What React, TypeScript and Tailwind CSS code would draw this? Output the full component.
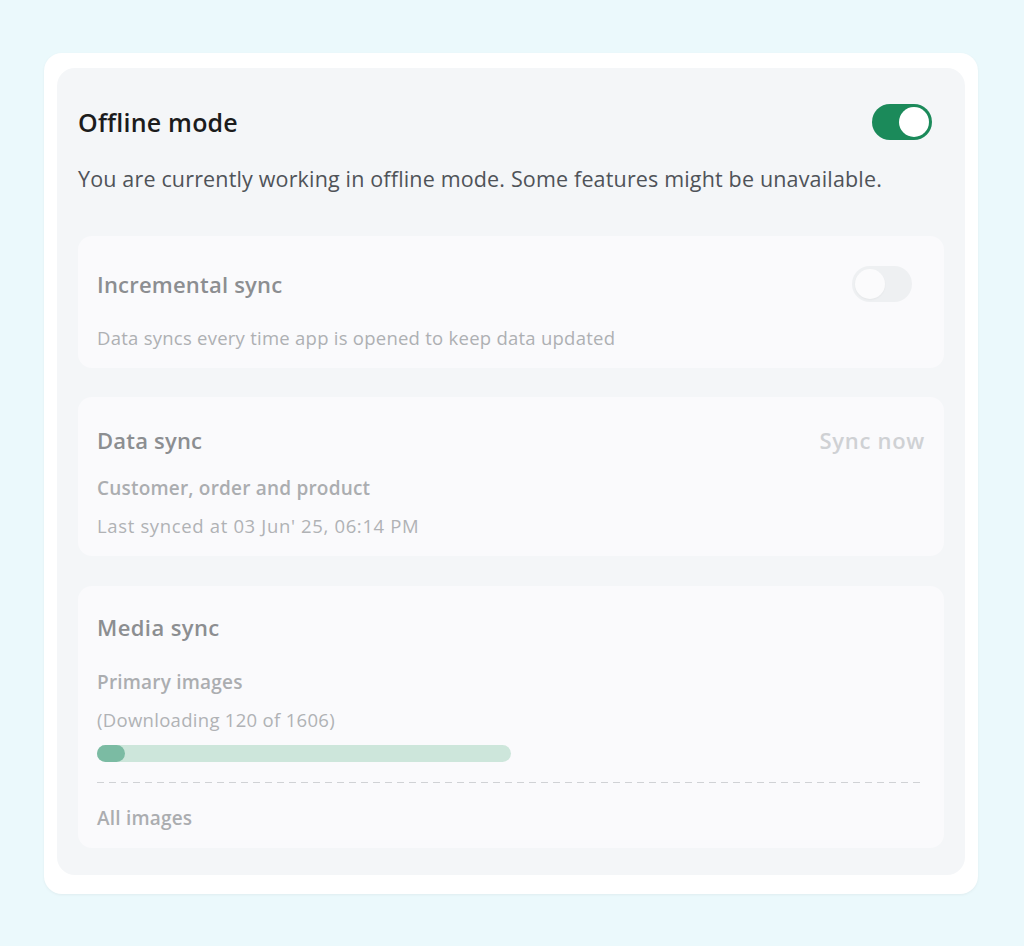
import React from 'react';

const Toggle: React.FC<{ on: boolean }> = ({ on }) => (
  <div
    className={
      on
        ? 'w-[60px] h-[36px] rounded-full bg-[#1b8a5a] p-[3px] flex justify-end'
        : 'w-[60px] h-[36px] rounded-full bg-[#eef0f2] p-[3px] flex justify-start'
    }
  >
    <div
      className={
        on
          ? 'w-[30px] h-[30px] rounded-full bg-white'
          : 'w-[30px] h-[30px] rounded-full bg-[#fbfbfc] shadow-[0_1px_2px_rgba(0,0,0,0.04)]'
      }
    />
  </div>
);

export default function App() {
  const downloaded = 120;
  const total = 1606;

  return (
    <div
      className="min-h-[946px] w-full bg-[#ebf9fc] pl-[44px] pt-[53px]"
      style={{ fontFamily: '"Open Sans", "Noto Sans", sans-serif' }}
    >
      <div className="w-[934px] rounded-[18px] bg-white px-[13px] pt-[15px] pb-[19px] shadow-[0_1px_3px_rgba(0,0,0,0.05)]">
        <div className="rounded-[18px] bg-[#f4f6f8] px-[21px] pt-[36px] pb-[27px]">
          {/* header */}
          <div className="flex items-center justify-between">
            <h1 className="text-[25px] leading-[32px] font-semibold text-[#1c1c1c] tracking-[0.2px]">Offline mode</h1>
            <div className="mr-[12px]">
              <Toggle on />
            </div>
          </div>
          <p className="mt-[25px] text-[21.5px] leading-[28px] text-[#4f5358] tracking-[0.16px]">
            You are currently working in offline mode. Some features might be unavailable.
          </p>

          {/* incremental sync */}
          <div className="mt-[43px] rounded-[14px] bg-[#fafafc] px-[19px] pt-[30px] pb-[18px]">
            <div className="flex items-center justify-between">
              <h2 className="text-[22px] leading-[30px] font-semibold text-[#8c8e91] tracking-[0.2px]">Incremental sync</h2>
              <div className="mr-[13px]">
                <Toggle on={false} />
              </div>
            </div>
            <p className="mt-[24px] text-[18.5px] leading-[24px] text-[#aeb0b3] tracking-[0.25px]">
              Data syncs every time app is opened to keep data updated
            </p>
          </div>

          {/* data sync */}
          <div className="mt-[29px] rounded-[14px] bg-[#fafafc] px-[19px] pt-[28px] pb-[18px]">
            <div className="flex items-center justify-between">
              <h2 className="text-[22px] leading-[30px] font-semibold text-[#8c8e91] tracking-[0.2px]">Data sync</h2>
              <button className="text-[22px] leading-[30px] font-semibold text-[#cfd1d4] tracking-[0.7px]">Sync now</button>
            </div>
            <p className="mt-[21px] text-[19px] leading-[24px] font-semibold text-[#abadb0] tracking-[0.2px]">
              Customer, order and product
            </p>
            <p className="mt-[14px] text-[18.5px] leading-[24px] text-[#b0b2b5] tracking-[0.65px]">
              Last synced at 03 Jun' 25, 06:14 PM
            </p>
          </div>

          {/* media sync */}
          <div className="mt-[30px] rounded-[14px] bg-[#fafafc] px-[19px] pt-[26px] pb-[18px]">
            <h2 className="text-[22px] leading-[30px] font-semibold text-[#8c8e91] tracking-[0.4px]">Media sync</h2>
            <p className="mt-[28px] text-[19px] leading-[24px] font-semibold text-[#abadb0] tracking-[0.2px]">Primary images</p>
            <p className="mt-[14px] text-[18.5px] leading-[24px] text-[#b0b2b5] tracking-[0.3px]">
              (Downloading {downloaded} of {total})
            </p>
            <div className="mt-[13px] h-[17px] w-[414px] rounded-full bg-[#cde6db]">
              <div className="h-full rounded-full bg-[#7bbba3]" style={{ width: 28 }} />
            </div>
            <div className="mt-[20px] h-px bg-[repeating-linear-gradient(90deg,#d0d2d5_0_7px,transparent_7px_12px)]" />
            <p className="mt-[23px] text-[19px] leading-[24px] font-semibold text-[#abadb0] tracking-[0.2px]">All images</p>
          </div>
        </div>
      </div>
    </div>
  );
}
